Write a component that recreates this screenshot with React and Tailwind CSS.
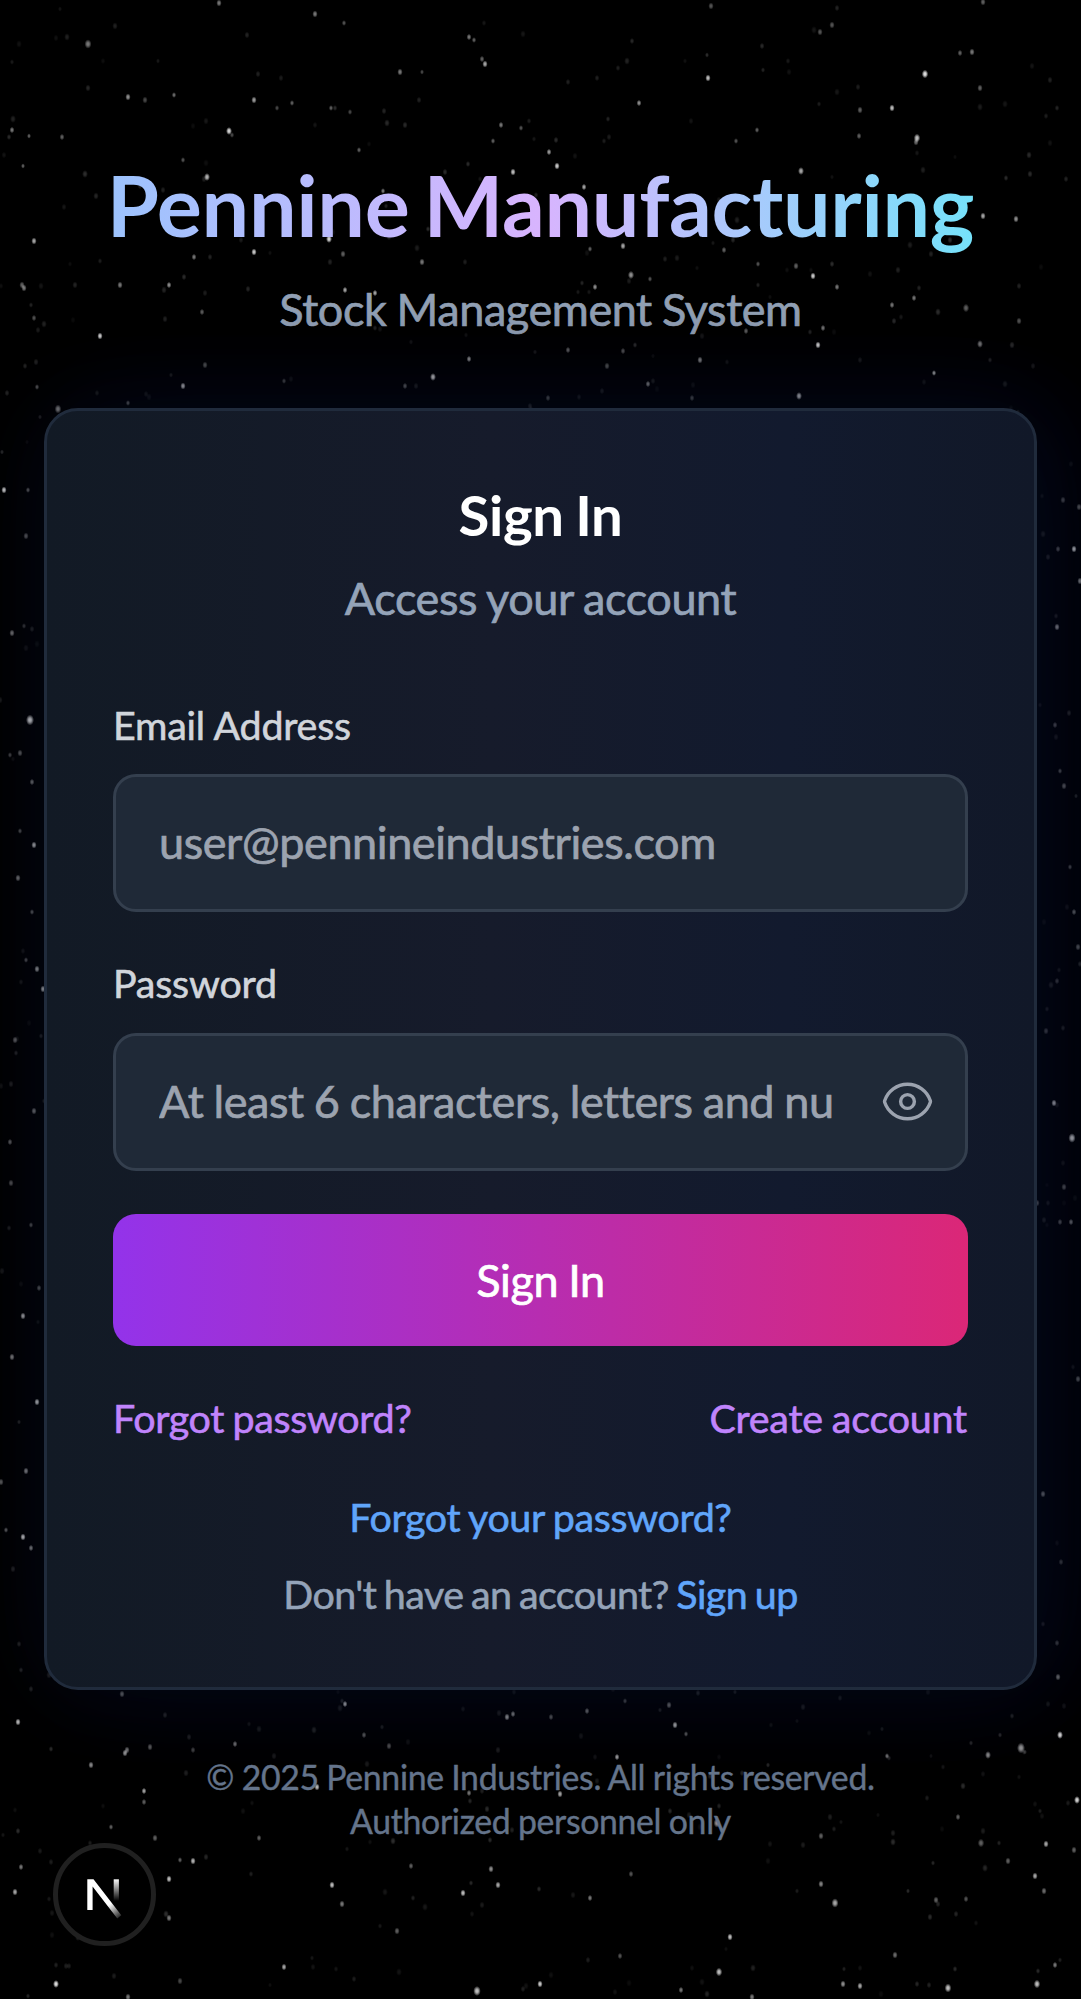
import React from "react";

// [x, y, radius, opacity]
const BRIGHT = [
  [88, 44, 2.6, 0.5], [219, 3, 2, 0.5], [315, 14, 2, 0.5], [344, 23, 1.6, 0.35], [469, 37, 1.8, 0.5], [474, 40, 1.6, 0.4],
  [482, 59, 1.8, 0.4], [485, 64, 2, 0.7], [400, 72, 2, 0.5], [422, 72, 1.5, 0.3], [708, 78, 2, 0.8], [925, 74, 2.4, 0.95],
  [832, 25, 2, 0.35], [820, 32, 2, 0.35], [960, 53, 1.8, 0.4], [972, 52, 2, 0.5], [980, 88, 2, 0.4], [983, 2, 2, 0.4],
  [711, 6, 2, 0.35], [128, 97, 2, 0.6], [145, 100, 2, 0.3], [174, 95, 1.6, 0.45], [254, 100, 2, 0.65], [292, 103, 1.6, 0.4],
  [331, 108, 1.6, 0.4], [350, 112, 1.6, 0.3], [277, 108, 1.6, 0.3], [639, 103, 1.8, 0.6], [892, 108, 2, 0.8], [860, 110, 2, 0.4],
  [917, 138, 2.4, 0.8], [916, 142, 2, 0.45], [859, 136, 1.8, 0.4], [12, 130, 1.8, 0.5], [29, 136, 1.5, 0.4], [62, 137, 1.8, 0.4],
  [229, 131, 2.2, 0.9], [232, 135, 1.6, 0.3], [501, 125, 1.8, 0.5], [521, 128, 1.6, 0.35], [549, 152, 1.8, 0.65], [557, 166, 2, 0.85],
  [513, 172, 2, 0.8], [493, 141, 1.6, 0.4], [757, 130, 1.6, 0.4], [736, 141, 1.6, 0.35], [801, 171, 2.2, 0.7], [207, 177, 2.2, 0.75],
  [23, 166, 1.5, 0.4], [183, 160, 1.6, 0.35], [359, 150, 1.6, 0.4], [584, 187, 1.8, 0.7], [383, 191, 1.6, 0.5], [983, 216, 2, 0.7],
  [1016, 219, 2, 0.6], [34, 241, 2, 0.7], [329, 239, 2.2, 0.9], [254, 252, 2, 0.85], [194, 257, 1.8, 0.5], [343, 254, 2, 0.4],
  [422, 262, 2, 0.5], [623, 246, 2, 0.7], [590, 249, 1.6, 0.4], [724, 250, 1.8, 0.4], [758, 264, 1.6, 0.35], [796, 266, 2, 0.4],
  [813, 276, 2, 0.85], [631, 275, 2.3, 0.6], [650, 279, 1.6, 0.35], [22, 285, 2, 0.4], [24, 288, 2, 0.5], [120, 285, 2, 0.5],
  [169, 285, 1.8, 0.6], [345, 290, 1.8, 0.7], [375, 293, 1.8, 0.7], [595, 287, 1.8, 0.6], [837, 287, 1.8, 0.5], [914, 298, 1.8, 0.5],
  [892, 305, 1.8, 0.5], [966, 308, 2.4, 0.4], [202, 312, 1.8, 0.4], [1019, 321, 2, 0.35], [34, 318, 1.8, 0.35], [100, 336, 2, 0.9],
  [746, 331, 1.8, 0.4], [823, 328, 1.8, 0.5], [818, 345, 2, 0.9], [980, 344, 2.2, 0.5], [568, 350, 1.8, 0.4], [623, 351, 1.8, 0.35],
  [469, 359, 1.8, 0.6], [700, 360, 2, 0.55], [205, 365, 2, 0.35], [607, 366, 2, 0.35], [433, 377, 2.2, 0.85], [934, 373, 1.6, 0.7],
  [183, 386, 2, 0.8], [405, 386, 1.8, 0.4], [284, 381, 1.6, 0.3], [648, 384, 1.8, 0.55], [799, 396, 2.2, 0.85], [37, 387, 1.6, 0.35],
  [58, 409, 2.5, 0.55], [128, 403, 1.6, 0.4], [692, 398, 1.8, 0.35], [548, 398, 1.8, 0.35],
  [4, 490, 2, 0.9], [28, 490, 1.6, 0.4], [26, 536, 2, 0.4], [12, 633, 2, 0.5], [24, 626, 1.6, 0.25], [30, 720, 3, 0.95],
  [20, 753, 2, 0.4], [10, 755, 1.6, 0.3], [32, 782, 1.8, 0.5], [34, 845, 2, 0.8], [18, 878, 2, 0.5], [20, 831, 1.6, 0.35], [32, 912, 1.6, 0.4],
  [1074, 549, 2, 0.9], [1058, 549, 1.8, 0.4], [1057, 627, 2, 0.7], [1063, 500, 2, 0.35], [1079, 507, 2, 0.4], [1080, 581, 2, 0.6],
  [1055, 725, 1.8, 0.4], [1060, 771, 1.6, 0.4], [1064, 786, 2, 0.45], [1074, 912, 1.8, 0.45], [1070, 867, 1.6, 0.35],
  [37, 969, 2, 0.7], [43, 989, 2, 0.8], [26, 960, 1.6, 0.35], [15, 1040, 2, 0.4], [34, 1111, 2, 0.5], [10, 1142, 1.8, 0.4],
  [11, 1183, 2, 0.35], [31, 1225, 1.6, 0.35], [39, 1288, 1.8, 0.4], [23, 1316, 2, 0.75], [12, 1357, 2, 0.55], [37, 1402, 2, 0.9],
  [1054, 1103, 2, 0.9], [1072, 1138, 2.7, 0.9], [1057, 981, 1.8, 0.3], [1046, 1031, 2, 0.35], [1064, 1187, 2, 0.4], [1037, 1203, 2, 0.5],
  [1071, 1222, 1.8, 0.5], [1060, 1222, 1.8, 0.4], [1078, 1379, 2, 0.4], [1078, 947, 2, 0.4],
  [26, 1471, 2, 0.6], [1, 1482, 2, 0.4], [23, 1537, 2, 0.9], [31, 1548, 1.8, 0.6], [6, 1530, 1.6, 0.4], [1043, 1494, 2, 0.6],
  [1058, 1677, 2, 0.5], [1057, 1643, 1.8, 0.3], [1061, 1562, 1.8, 0.3],
  [345, 1704, 1.8, 0.85], [122, 1694, 2, 0.5], [507, 1717, 2, 0.7], [513, 1714, 1.8, 0.6], [551, 1717, 1.8, 0.4], [587, 1711, 1.8, 0.5],
  [669, 1705, 2, 0.5], [675, 1725, 2, 0.8], [686, 1734, 1.6, 0.4], [625, 1701, 1.6, 0.35], [18, 1722, 2, 0.8], [364, 1735, 1.8, 0.4],
  [235, 1744, 1.8, 0.5], [127, 1750, 2, 0.5], [125, 1753, 2, 0.65], [150, 1747, 2, 0.4], [91, 1765, 2, 0.6], [617, 1757, 1.8, 0.7],
  [389, 1746, 2, 0.35], [988, 1755, 2.2, 0.6], [1021, 1748, 3, 0.65], [1060, 1735, 2.2, 0.95], [887, 1756, 1.6, 0.5], [193, 1750, 1.8, 0.3],
  [317, 1787, 2, 0.8], [144, 1791, 1.8, 0.7], [144, 1802, 1.8, 0.4], [469, 1793, 1.8, 0.5], [560, 1794, 2, 0.7], [717, 1823, 2.6, 0.6],
  [1077, 1800, 2.2, 0.9], [958, 1817, 1.8, 0.4], [111, 1827, 1.6, 0.4], [155, 1838, 2, 0.4], [259, 1838, 1.8, 0.4], [821, 1836, 2, 0.4],
  [981, 1843, 2.4, 0.4], [1046, 1844, 2, 0.7], [1074, 1850, 2, 0.4], [193, 1861, 2, 0.75], [180, 1860, 1.6, 0.4], [411, 1866, 1.8, 0.4],
  [491, 1869, 2, 0.6], [498, 1885, 2, 0.7], [463, 1893, 2, 0.8], [332, 1885, 2, 0.8], [342, 1904, 2, 0.5], [169, 1879, 2, 0.8],
  [169, 1918, 2, 0.5], [21, 1867, 1.8, 0.5], [15, 1892, 2, 0.7], [590, 1898, 1.8, 0.5], [631, 1874, 1.8, 0.35], [821, 1884, 2, 0.55],
  [835, 1903, 2.6, 0.7], [1008, 1861, 2, 0.4], [1035, 1876, 2, 0.7], [1044, 1891, 2, 0.45], [936, 1900, 2, 0.4], [966, 1899, 1.8, 0.35],
  [730, 1937, 2, 0.8], [397, 1931, 2, 0.4], [284, 1967, 1.9, 0.7], [56, 1984, 2.2, 0.95], [477, 1991, 2.8, 0.8], [540, 1984, 2, 0.85],
  [719, 1972, 2.4, 0.8], [843, 1984, 2, 0.6], [860, 1986, 2, 0.7], [948, 1988, 2.5, 0.8], [1037, 1984, 2.4, 0.8], [1055, 1965, 1.8, 0.5],
  [895, 1955, 2, 0.45], [620, 1956, 1.8, 0.35], [681, 1990, 1.8, 0.5], [180, 1981, 2, 0.3], [128, 1997, 2, 0.5], [752, 1997, 2, 0.5],
];

function faintStars(count) {
  let seed = 20251;
  const next = () => {
    seed = (seed * 16807) % 2147483647;
    return seed / 2147483647;
  };
  return Array.from({ length: count }, () => [
    Math.round(next() * 1081),
    Math.round(next() * 1999),
    1.5 + next() * 0.7,
    0.05 + next() * 0.14,
  ]);
}

const STARS = [...faintStars(850), ...BRIGHT];

function StarField() {
  return (
    <svg className="pointer-events-none absolute inset-0 h-full w-full" viewBox="0 0 1081 1999" aria-hidden="true">
      <defs>
        <radialGradient id="star">
          <stop offset="0" stopColor="#fff" />
          <stop offset="0.4" stopColor="#fff" stopOpacity="0.8" />
          <stop offset="1" stopColor="#fff" stopOpacity="0" />
        </radialGradient>
      </defs>
      {STARS.map(([x, y, r, o], i) => (
        <ellipse key={i} cx={x} cy={y} rx={r * 1.35} ry={r * 1.8} fill="url(#star)" opacity={o} />
      ))}
    </svg>
  );
}

function EyeIcon() {
  return (
    <svg className="size-[55px]" viewBox="0 0 24 24" fill="none" stroke="currentColor" strokeWidth="1.5" strokeLinecap="round" strokeLinejoin="round">
      <path d="M2.036 12.322a1.012 1.012 0 0 1 0-.639C3.423 7.51 7.36 4.5 12 4.5c4.638 0 8.573 3.007 9.963 7.178.07.207.07.431 0 .639C20.577 16.49 16.64 19.5 12 19.5c-4.638 0-8.573-3.007-9.963-7.178Z" />
      <path d="M15 12a3 3 0 1 1-6 0 3 3 0 0 1 6 0Z" />
    </svg>
  );
}

function DevBadge() {
  return (
    <div className="absolute top-[1843px] left-[53px] grid size-[103px] place-items-center rounded-full border-[5px] border-[#202020] bg-black">
      <svg className="size-[94px]" viewBox="0 0 94 94" fill="none">
        <defs>
          <linearGradient id="diag" x1="52" y1="56" x2="64" y2="71" gradientUnits="userSpaceOnUse">
            <stop stopColor="#fff" />
            <stop offset="1" stopColor="#fff" stopOpacity="0" />
          </linearGradient>
          <linearGradient id="stem" x1="58" y1="31" x2="58" y2="53" gradientUnits="userSpaceOnUse">
            <stop stopColor="#fff" />
            <stop offset="1" stopColor="#fff" stopOpacity="0" />
          </linearGradient>
        </defs>
        <path d="M29.3 62V31.3h6.2L63.3 67.2l-4 3.2L34.6 38.6V62Z" fill="url(#diag)" />
        <path d="M55.7 31.3h5.2v22h-5.2Z" fill="url(#stem)" />
      </svg>
    </div>
  );
}

const BODY = "text-[45px] tracking-[-0.42px] [word-spacing:-1px] [-webkit-text-stroke:0.7px_currentColor]";
const SMALL = "text-[39.4px] leading-[48px] tracking-[-0.36px] [word-spacing:-1px] [-webkit-text-stroke:0.6px_currentColor]";
const LABEL = "block text-[39.4px] leading-[48px] tracking-[-0.2px] text-[#d1d5db] [-webkit-text-stroke:0.6px_currentColor]";
const FIELD =
  "block h-[138px] w-full rounded-[23px] border-[3px] border-[#343f4e] bg-[#1f2937] pb-[3px] pl-[43px] text-white placeholder:text-[#9ca3af] placeholder:opacity-100 outline-none";

export default function App() {
  return (
    <div className="relative h-[1999px] w-[1081px] overflow-hidden bg-black font-['Lato',sans-serif]">
      <StarField />
      <main className="relative flex flex-col px-[44px] pt-[154px]">
        <header className="text-center">
          <h1 className="bg-[linear-gradient(to_right,#93c5fd,#d8b4fe,#67e8f9)] bg-clip-text text-[84.5px] leading-[101px] font-bold tracking-[-0.35px] text-transparent [word-spacing:-6px]">
            Pennine Manufacturing
          </h1>
          <p className={`mt-[20px] leading-[68px] text-[#94a3b8] ${BODY}`}>Stock Management System</p>
        </header>

        <section className="mt-[65px] h-[1282px] rounded-[34px] border-[3px] border-[#202b3c] bg-[linear-gradient(to_right,#121a25,#161b2b_45%,#121a2e_75%,#111828)] px-[66px] pt-[69px] shadow-[0_0_100px_rgba(8,14,30,0.5),30px_0_110px_rgba(3,10,40,0.55)]">
          <h2 className="text-center text-[56.3px] leading-[68px] font-bold tracking-[-0.3px] text-white [word-spacing:-2px]">Sign In</h2>
          <p className={`mt-[23px] text-center leading-[54px] text-[#94a3b8] ${BODY}`}>Access your account</p>

          <form className="mt-[76px]">
            <label className={LABEL}>Email Address</label>
            <input type="email" placeholder="user@pennineindustries.com" className={`${FIELD} ${BODY} mt-[25px]`} />
            <label className={`mt-[47px] ${LABEL}`}>Password</label>
            <div className="relative mt-[26px]">
              <input type="password" placeholder="At least 6 characters, letters and nu" className={`${FIELD} ${BODY} pr-[100px]`} />
              <button type="button" aria-label="Show password" className="absolute inset-y-0 right-[33px] flex items-center pb-[2px] text-[#9ca3af]">
                <EyeIcon />
              </button>
            </div>
            <button type="button" className={`mt-[43px] block h-[132px] w-full rounded-[23px] bg-[linear-gradient(to_right,#9333ea,#db2777)] pt-[2px] text-white ${BODY}`}>
              Sign In
            </button>
          </form>

          <div className={`mt-[48px] flex justify-between pr-px text-[#c084fc] ${SMALL}`}>
            <a>Forgot password?</a>
            <a className="tracking-[-0.2px]">Create account</a>
          </div>
          <div className={`mt-[51px] text-center text-[#60a5fa] ${SMALL}`}>
            <a>Forgot your password?</a>
          </div>
          <p className="mt-[29px] text-center text-[39.4px] leading-[48px] tracking-[-0.55px] text-[#94a3b8] [-webkit-text-stroke:0.6px_currentColor] [word-spacing:-2px]">
            Don't have an account? <a className="text-[#60a5fa] [-webkit-text-stroke:0.6px_currentColor]">Sign up</a>
          </p>
        </section>

        <footer className="mt-[65px] text-center text-[33.8px] leading-[44px] tracking-[-0.33px] text-[#64748b] [-webkit-text-stroke:0.4px_currentColor] [word-spacing:-0.8px]">
          <p>© 2025 Pennine Industries. All rights reserved.</p>
          <p>Authorized personnel only</p>
        </footer>
      </main>
      <DevBadge />
    </div>
  );
}
